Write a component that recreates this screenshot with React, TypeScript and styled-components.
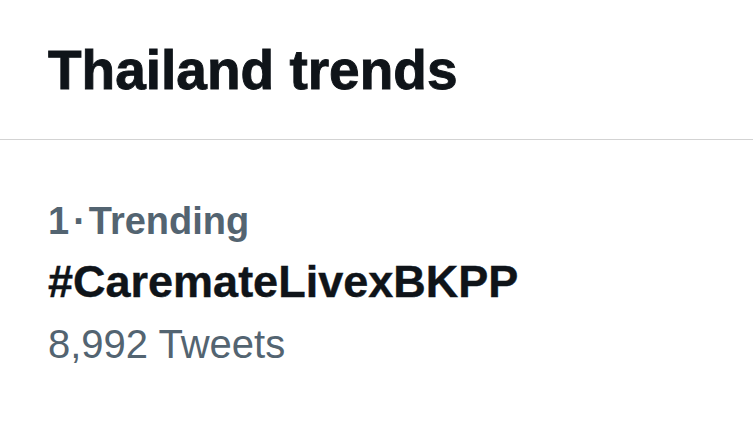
import React from "react";
import styled, { createGlobalStyle } from "styled-components";

const trends: Trend[] = [
  { rank: 1, label: "Trending", name: "#CaremateLivexBKPP", tweets: 8992 },
];

const App: React.FC = () => {
  return (
    <>
      <GlobalStyle />
      <Root>
        <Header>
          <Title>Thailand trends</Title>
        </Header>
        {trends.map((trend) => (
          <TrendItem key={trend.rank} trend={trend} />
        ))}
      </Root>
    </>
  );
};

const TrendItem: React.FC<{ trend: Trend }> = ({ trend }) => (
  <Item>
    <Meta>
      {trend.rank}
      <Dot>·</Dot>
      {trend.label}
    </Meta>
    <Hashtag>{trend.name}</Hashtag>
    <Count>{trend.tweets.toLocaleString("en-US")} Tweets</Count>
  </Item>
);

export default App;

interface Trend {
  rank: number;
  label: string;
  name: string;
  tweets: number;
}

const GlobalStyle = createGlobalStyle`
  html, body {
    margin: 0;
    padding: 0;
    background: #ffffff;
  }
  body {
    font-family: "Liberation Sans", Arial, sans-serif;
  }
`;

const Root = styled.div`
  width: 753px;
  height: 435px;
  overflow: hidden;
  background: #ffffff;
`;

const Header = styled.div`
  padding: 38px 48px 37px;
  border-bottom: 1px solid #d3d3d3;
`;

const Title = styled.h1`
  margin: 0;
  font-size: 55px;
  line-height: 64px;
  font-weight: 700;
  color: #0f1419;
  -webkit-text-stroke: 0.9px #0f1419;
`;

const Item = styled.div`
  display: flex;
  flex-direction: column;
  padding: 59px 48px 0;
`;

const Meta = styled.div`
  display: flex;
  font-size: 38px;
  line-height: 44px;
  font-weight: 700;
  color: #536471;
`;

const Dot = styled.span`
  margin: 0 3px 0 4px;
`;

const Hashtag = styled.div`
  margin-top: 13px;
  font-size: 45px;
  line-height: 52px;
  font-weight: 700;
  color: #0f1419;
  -webkit-text-stroke: 0.4px #0f1419;
`;

const Count = styled.div`
  margin-top: 13px;
  font-size: 40px;
  line-height: 46px;
  font-weight: 400;
  color: #536471;
`;
